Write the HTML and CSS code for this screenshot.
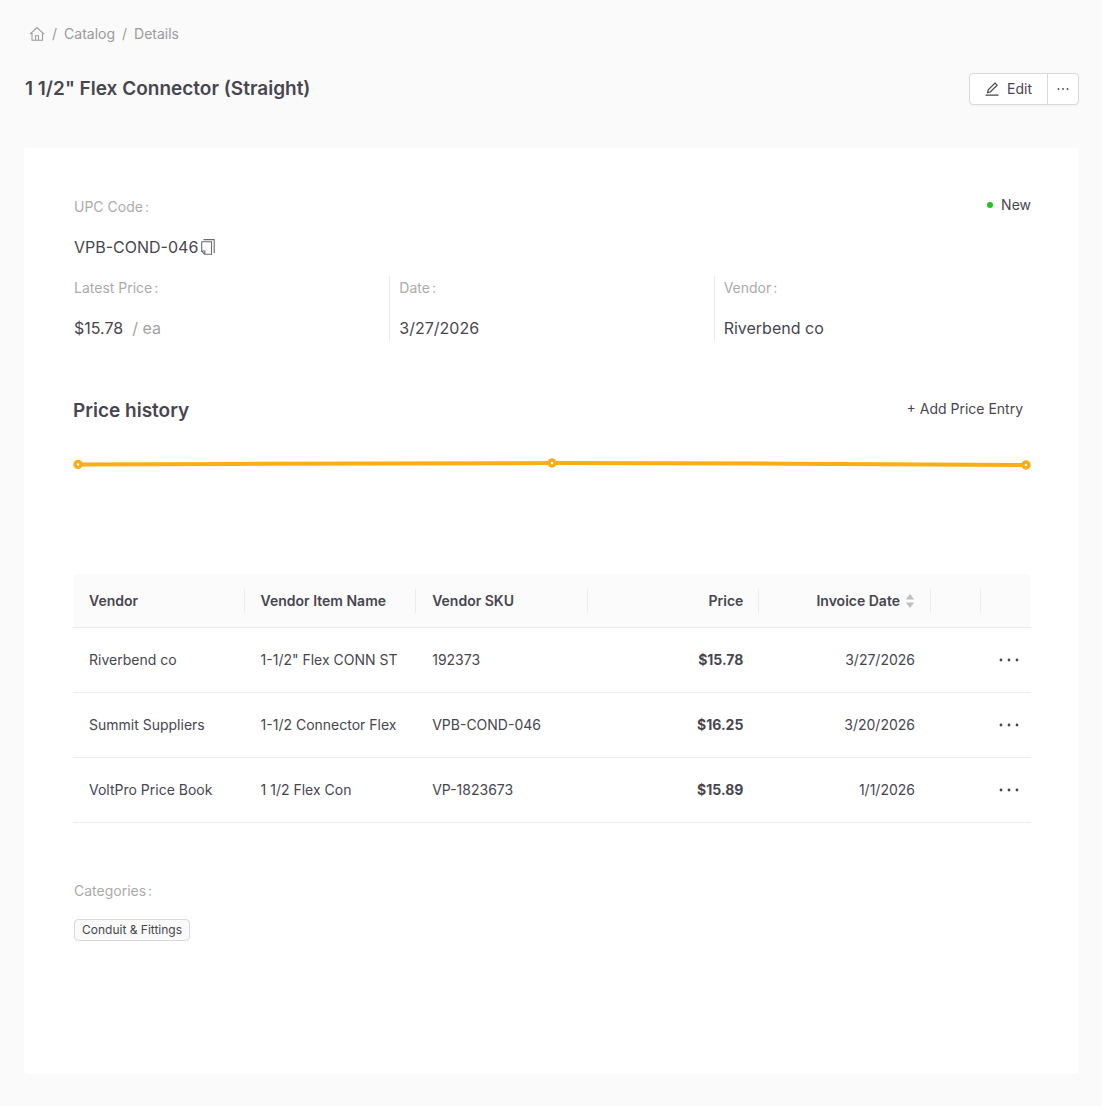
FILE: index.html
```html
<!DOCTYPE html>
<html lang="en">
<head>
<meta charset="utf-8">
<meta name="viewport" content="width=device-width, initial-scale=1">
<title>1 1/2" Flex Connector (Straight)</title>
<link rel="stylesheet" href="styles.css">
</head>
<body>
<svg class="sprite" aria-hidden="true">
  <symbol id="dots" viewBox="0 0 20 4"><circle cx="2" cy="2" r="1.400"/><circle cx="10" cy="2" r="1.400"/><circle cx="18" cy="2" r="1.400"/></symbol>
</svg>
<main class="page">
  <nav class="breadcrumb" aria-label="Breadcrumb">
    <a class="home" href="#" aria-label="Home">
      <svg width="16" height="16" viewBox="0 0 16 16" fill="none" stroke="currentColor" stroke-width="1.100"><path d="M1 8.200 8 1.500l7 6.700M3 7v7.300h10.500V7M6.500 14.300v-4.500h3v4.500"/></svg>
    </a>
    <span class="slash">/</span><a href="#">Catalog</a><span class="slash">/</span><a href="#">Details</a>
  </nav>
  <header class="header">
    <h1>1 1/2" Flex Connector (Straight)</h1>
    <div class="actions">
      <button class="edit" type="button">
        <svg width="14" height="14" viewBox="0 0 14 14" fill="none" stroke="currentColor" stroke-width="1.2"><path d="M.5 13.200h13M2.600 10.700l.6-2.800L10 1.100l2.100 2.100-6.800 6.800-2.700.7z"/></svg>
        Edit
      </button><button class="more" type="button" aria-label="More actions">
        <svg width="12" height="4" viewBox="0 0 12 4" fill="currentColor"><circle cx="1.500" cy="2" r=".9"/><circle cx="6" cy="2" r=".9"/><circle cx="10.500" cy="2" r=".9"/></svg>
      </button>
    </div>
  </header>
  <section class="card">
    <div class="top">
      <dl class="field">
        <dt>UPC Code<span class="colon">:</span></dt>
        <dd>VPB-COND-046
          <button class="icon copy" type="button" aria-label="Copy">
            <svg width="14" height="16" viewBox="0 0 14 16" fill="none" stroke="currentColor" stroke-width="1.100"><path d="M2.500.6h10.700v13.400M3.800 15.300.700 12.200V2.800h9.800v12.500zM.700 12h3.100v3.300"/></svg>
          </button>
        </dd>
      </dl>
      <span class="status">New</span>
    </div>
    <dl class="facts">
      <div class="field"><dt>Latest Price<span class="colon">:</span></dt><dd>$15.78 <span class="unit">/ ea</span></dd></div>
      <div class="field"><dt>Date<span class="colon">:</span></dt><dd>3/27/2026</dd></div>
      <div class="field"><dt>Vendor<span class="colon">:</span></dt><dd>Riverbend co</dd></div>
    </dl>
    <div class="history">
      <h2>Price history</h2>
      <button class="add" type="button">+ Add Price Entry</button>
    </div>
    <svg class="chart" viewBox="0 0 957 100" role="img" aria-label="Price history chart">
      <path d="M5 11.500C163 11 321 10 479 10S794 11 952 12" fill="none" stroke="#faad14" stroke-width="4"/>
      <g fill="#fff" stroke="#faad14" stroke-width="3.500"><circle cx="5" cy="11.500" r="3"/><circle cx="478.500" cy="10" r="3"/><circle cx="952" cy="12" r="3"/></g>
    </svg>
    <table>
      <colgroup><col span="5"><col class="narrow" span="2"></colgroup>
      <thead>
        <tr>
          <th scope="col">Vendor</th><th scope="col">Vendor Item Name</th><th scope="col">Vendor SKU</th><th scope="col" class="num">Price</th>
          <th scope="col" class="num"><button class="sort" type="button">Invoice Date <svg width="10" height="14" viewBox="0 0 10 14" fill="#bfbfbf"><path d="M5 0 9.200 5.500H.8zM5 14 .8 8.500h8.400z"/></svg></button></th>
          <td></td><td></td>
        </tr>
      </thead>
      <tbody>
        <tr><td>Riverbend co</td><td>1-1/2" Flex CONN ST</td><td>192373</td><td class="num price">$15.78</td><td class="num">3/27/2026</td><td></td><td class="menu"><button class="icon" type="button" aria-label="Row actions"><svg width="20" height="4" fill="currentColor"><use href="#dots"/></svg></button></td></tr>
        <tr><td>Summit Suppliers</td><td>1-1/2 Connector Flex</td><td>VPB-COND-046</td><td class="num price">$16.25</td><td class="num">3/20/2026</td><td></td><td class="menu"><button class="icon" type="button" aria-label="Row actions"><svg width="20" height="4" fill="currentColor"><use href="#dots"/></svg></button></td></tr>
        <tr><td>VoltPro Price Book</td><td>1 1/2 Flex Con</td><td>VP-1823673</td><td class="num price">$15.89</td><td class="num">1/1/2026</td><td></td><td class="menu"><button class="icon" type="button" aria-label="Row actions"><svg width="20" height="4" fill="currentColor"><use href="#dots"/></svg></button></td></tr>
      </tbody>
    </table>
    <div class="categories">
      <span class="label">Categories<span class="colon">:</span></span>
      <span class="tag">Conduit &amp; Fittings</span>
    </div>
  </section>
</main>
</body>
</html>
```
FILE: styles.css
```css
* { box-sizing: border-box; }
body {
  margin: 0;
  background: #fafafa;
  color: #47464f;
  font: 14px/22px Inter, "Liberation Sans", sans-serif;
}
h1, h2, dl, dd { margin: 0; }
h1, h2 { font-size: 19px; line-height: 32px; font-weight: 600; }
svg { display: block; flex: none; }
button { font: inherit; color: inherit; cursor: pointer; }
.sprite { display: none; }
.page {
  min-height: 100vh;
  padding: 23px 23px 32px 24px;
  display: flex;
  flex-direction: column;
}
.breadcrumb { display: flex; align-items: center; padding-left: 5px; color: #9b9b9b; }
.breadcrumb a { color: inherit; text-decoration: none; }
.slash { margin: 0 7px; }
.header { display: flex; justify-content: space-between; align-items: center; margin-top: 28px; padding-left: 1px; }
.actions { display: flex; }
.actions button {
  display: flex;
  align-items: center;
  justify-content: center;
  gap: 8px;
  height: 32px;
  background: #fff;
  border: 1px solid #d9d9d9;
  box-shadow: 0 2px 0 rgba(0, 0, 0, 0.02);
}
.actions .edit { padding: 0 15px; border-radius: 4px 0 0 4px; }
.actions .more { width: 32px; margin-left: -1px; padding: 0; border-radius: 0 4px 4px 0; }
.card { flex: 1; margin-top: 43px; padding: 46px 48px 48px 49px; background: #fff; border-radius: 4px; }
.top { display: flex; justify-content: space-between; align-items: flex-start; }
dt, .label { color: #ababab; }
dd { display: flex; align-items: center; font-size: 16px; line-height: 24px; }
.field { display: flex; flex-direction: column; gap: 17px; padding: 1px; }
.top .field { padding-top: 2px; }
.colon { margin-left: 2px; }
.icon { display: inline-flex; padding: 0; border: 0; background: none; }
.copy { margin-left: 3px; color: #6b6b70; }
.unit { margin-left: 9px; color: #a3a3a3; }
.status { display: flex; align-items: center; gap: 8px; }
.status::before { content: ""; width: 6px; height: 6px; border-radius: 50%; background: #26c026; }
.facts { display: grid; grid-template-columns: 316fr 324fr 317fr; margin-top: 16px; }
.facts .field + .field { border-left: 1px solid #ececec; padding-left: 9px; }
.history { display: flex; justify-content: space-between; align-items: flex-start; margin-top: 54px; }
.add { padding: 0 8px; border: 0; background: none; line-height: 28px; }
.chart { width: 100%; height: auto; margin-top: 26px; }
table { width: 100%; margin-top: 21px; table-layout: fixed; border-collapse: separate; border-spacing: 0; }
.narrow { width: 50px; }
th, td { height: 65px; padding: 0 16px; text-align: left; border-bottom: 1px solid #ededed; white-space: nowrap; }
thead :is(th, td) {
  height: 54px;
  font-weight: 600;
  background: linear-gradient(#ececec, #ececec) right / 1px 24px no-repeat #fbfbfb;
}
thead td:last-child { background: #fbfbfb; }
thead th:first-child { border-top-left-radius: 4px; }
thead td:last-child { border-top-right-radius: 4px; }
.num { text-align: right; }
.price { font-weight: 700; }
.sort { display: inline-flex; align-items: center; gap: 5px; padding: 0; border: 0; background: none; }
.menu { padding: 0 12px 0 0; }
.menu .icon { display: flex; margin-left: auto; }
.categories { display: flex; flex-direction: column; align-items: flex-start; gap: 17px; margin-top: 57px; padding-left: 1px; }
.tag { padding: 0 7px; font-size: 12px; line-height: 20px; background: #fafafa; border: 1px solid #d9d9d9; border-radius: 4px; }
```
